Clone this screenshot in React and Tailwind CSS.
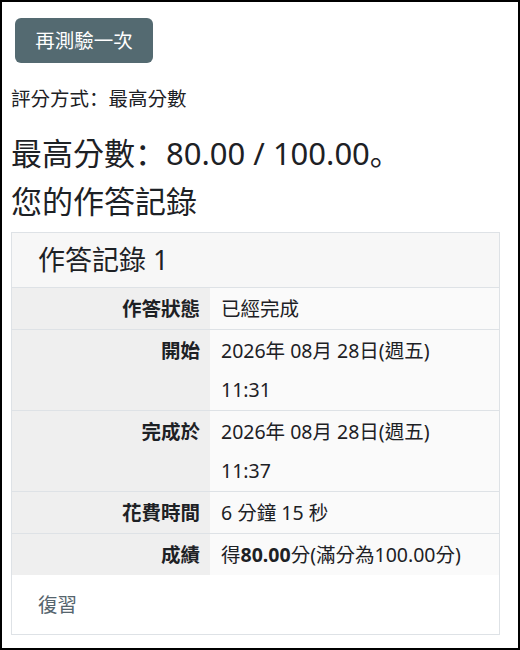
import React from "react";

const rows = [
  { label: "作答狀態", value: ["已經完成"] },
  { label: "開始", value: ["2026年 08月 28日(週五)", "11:31"] },
  { label: "完成於", value: ["2026年 08月 28日(週五)", "11:37"] },
  { label: "花費時間", value: ["6 分鐘 15 秒"] },
];

// punctuation placed on the left like the reference
const Punct = ({ children }) => (
  <span style={{ fontFamily: '"Noto Sans CJK SC", sans-serif' }}>{children}</span>
);

const App = () => {
  return (
    <div
      className="w-[520px] h-[650px] border-2 border-black overflow-hidden bg-white text-[#1d2125]"
      style={{ fontFamily: '"Noto Sans", "Noto Sans CJK TC", sans-serif' }}
    >
      <div className="pl-[9px]">
        <button className="ml-[4px] mt-[16px] h-[45px] w-[138px] rounded-[6px] bg-[#546a71] text-white text-[19.5px]">
          再測驗一次
        </button>

        <p className="mt-[21px] h-[28px] text-[19.5px] leading-[28px]">
          評分方式<Punct>：</Punct>最高分數
        </p>

        <h3 className="mt-[22px] h-[36px] text-[31px] leading-[36px]">
          最高分數<Punct>：</Punct>80.00 / 100.00<Punct>。</Punct>
        </h3>
        <h2 className="mt-[13px] h-[36px] text-[31px] leading-[36px]">您的作答記錄</h2>

        <div className="mt-[13px] w-[489px] border border-[#dee2e6]">
          <div className="h-[54px] bg-[#f7f7f7] pl-[26px] flex items-center text-[27px]">
            作答記錄 1
          </div>
          <table className="w-full border-collapse text-[19.5px]">
            <tbody>
              {rows.map((r) => (
                <tr key={r.label} className="border-t border-[#dee2e6]">
                  <th className="w-[198px] bg-[#efefef] text-right align-top font-bold pr-[10px] py-[1px] leading-[39px]">
                    {r.label}
                  </th>
                  <td className="bg-[#fafafa] pl-[11px] py-[1px] leading-[39px]">
                    {r.value.map((v, i) => (
                      <div key={i}>{v}</div>
                    ))}
                  </td>
                </tr>
              ))}
              <tr className="border-t border-[#dee2e6]">
                <th className="w-[198px] bg-[#efefef] text-right align-top font-bold pr-[10px] py-[1px] leading-[39px]">
                  成績
                </th>
                <td className="bg-[#fafafa] pl-[11px] py-[1px] leading-[39px]">
                  得<b>80.00</b>分(滿分為100.00分)
                </td>
              </tr>
            </tbody>
          </table>
          <div className="h-[59px] pl-[26px] flex items-center text-[19.5px] text-[#55646d]">
            復習
          </div>
        </div>
      </div>
    </div>
  );
};

export default App;
